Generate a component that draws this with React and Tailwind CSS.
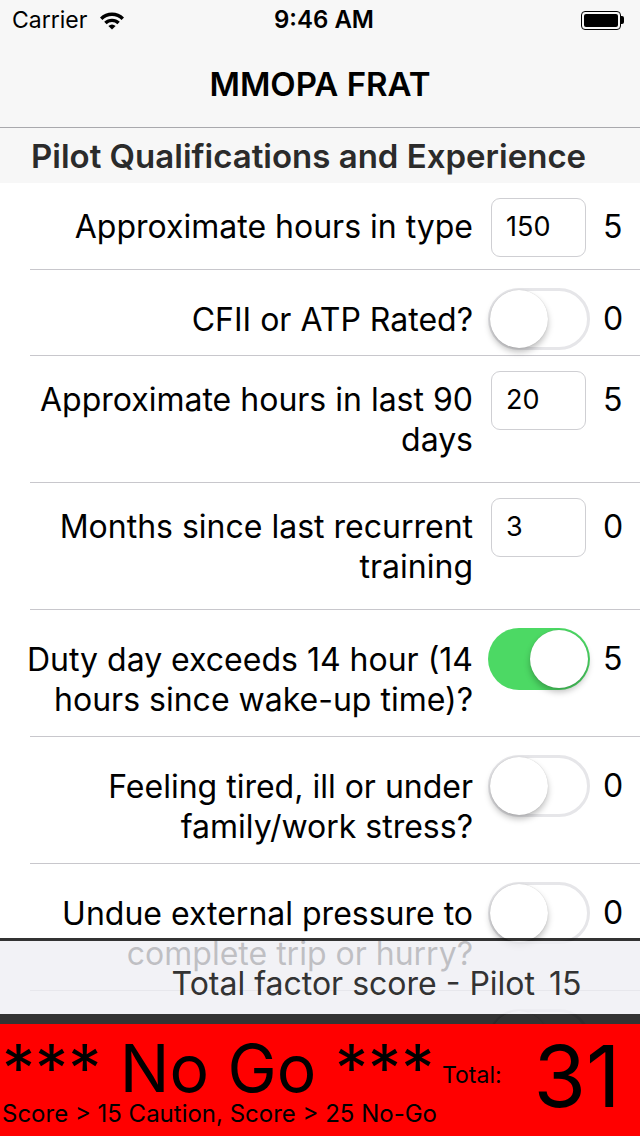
import React from "react";

const FONT = { fontFamily: "Inter, 'Liberation Sans', sans-serif" };

function Toggle({ on }) {
  return (
    <div
      className={
        "relative w-[102px] h-[62px] rounded-full " +
        (on ? "bg-[#4cd964]" : "bg-white border-[3px] border-[#e6e6e9]")
      }
    >
      <div
        className={
          "absolute w-[58px] h-[58px] rounded-full bg-white shadow-[0_4px_6px_rgba(0,0,0,0.25),0_0_1px_rgba(0,0,0,0.2)] " +
          (on ? "top-[2px] right-[2px]" : "top-[-1px] left-[-1px]")
        }
      />
    </div>
  );
}

function InputBox({ value }) {
  return (
    <div className="ml-[3px] w-[95px] h-[59px] rounded-[9px] border border-[#cfcfd3] flex items-center pl-[14px] text-[27px] text-black">
      {value}
    </div>
  );
}

function Row({ lines, control, score, h, toggle }) {
  return (
    <div>
      <div className={"flex items-start " + h}>
        <div
          className={
            "flex-1 text-right pr-[15px] text-[32px] leading-[40px] text-black " +
            (toggle ? "pt-[30px]" : "pt-[24px]")
          }
        >
          {lines.map((l, i) => (
            <div key={i} className="whitespace-nowrap">{l}</div>
          ))}
        </div>
        <div className={"w-[102px] " + (toggle ? "pt-[18px]" : "pt-[15px]")}>{control}</div>
        <div
          className={
            "w-[50px] pl-[13px] text-[32px] leading-[40px] text-black " +
            (toggle ? "pt-[29px]" : "pt-[24px]")
          }
        >
          {score}
        </div>
      </div>
      <div className="ml-[30px] h-px bg-[#c8c7cc]" />
    </div>
  );
}

export default function App() {
  return (
    <div className="relative w-[640px] h-[1136px] overflow-hidden bg-white" style={FONT}>
      {/* Status + nav bar */}
      <div className="bg-[#f7f7f7] border-b border-[#a9a9ad]">
        <div className="h-[40px] flex items-center px-[12px] relative">
          <div className="flex items-center gap-[12px]">
            <span className="text-[23px] text-black">Carrier</span>
            <svg width="26" height="20" viewBox="0 0 26 20">
              <path d="M1 7.5 A17 17 0 0 1 25 7.5 L22.6 10 A13.6 13.6 0 0 0 3.4 10 Z" fill="#000" />
              <path d="M5.2 11.8 A11.2 11.2 0 0 1 20.8 11.8 L18.4 14.2 A7.8 7.8 0 0 0 7.6 14.2 Z" fill="#000" />
              <path d="M9.4 16 A5.6 5.6 0 0 1 16.6 16 L13 19.6 Z" fill="#000" />
            </svg>
          </div>
          <div className="absolute left-0 right-0 top-0 h-[40px] flex items-center justify-center">
            <span className="text-[24px] font-semibold text-black ml-[8px]">9:46 AM</span>
          </div>
          <div className="ml-auto flex items-center mr-[4px]">
            <div className="w-[40px] h-[19px] rounded-[4px] border border-black p-[2px]">
              <div className="w-full h-full bg-black rounded-[2px]" />
            </div>
            <div className="w-[3px] h-[8px] bg-black rounded-r-[2px]" />
          </div>
        </div>
        <div className="h-[87px] flex items-center justify-center pt-[2px]">
          <span className="text-[33px] font-semibold text-black">MMOPA FRAT</span>
        </div>
      </div>

      {/* Section header */}
      <div className="h-[55px] bg-[#f7f7f7] flex items-center pl-[31px] pt-[3px]">
        <span className="text-[33px] font-semibold text-[#2b2b2b]">
          Pilot Qualifications and Experience
        </span>
      </div>

      {/* Rows */}
      <Row lines={["Approximate hours in type"]} control={<InputBox value="150" />} score="5" h="h-[86px]" />
      <Row lines={["CFII or ATP Rated?"]} control={<Toggle on={false} />} score="0" toggle h="h-[85px]" />
      <Row
        lines={["Approximate hours in last 90", "days"]}
        control={<InputBox value="20" />}
        score="5"
        h="h-[126px]"
      />
      <Row
        lines={["Months since last recurrent", "training"]}
        control={<InputBox value="3" />}
        score="0"
        h="h-[126px]"
      />
      <Row
        lines={["Duty day exceeds 14 hour (14", "hours since wake-up time)?"]}
        control={<Toggle on />}
        score="5"
        h="h-[126px]"
        toggle
      />
      <Row
        lines={["Feeling tired, ill or under", "family/work stress?"]}
        control={<Toggle on={false} />}
        score="0"
        h="h-[126px]"
        toggle
      />
      <Row
        lines={["Undue external pressure to", "complete trip or hurry?"]}
        control={<Toggle on={false} />}
        score="0"
        h="h-[126px]"
        toggle
      />
      <Row lines={[]} control={<Toggle on={false} />} score="" h="h-[85px]" toggle />

      {/* Footer overlay */}
      <div className="absolute left-0 right-0 top-[938px] bottom-0 flex flex-col">
        <div className="h-[3px] bg-black/80" />
        <div className="h-[73px] bg-[#efeff4]/80 flex items-center">
          <div className="w-[535px] text-right text-[32px] text-[#333] pt-[12px]">
            Total factor score - Pilot
          </div>
          <div className="pl-[14px] text-[32px] text-[#333] pt-[12px]">15</div>
        </div>
        <div className="h-[10px] bg-black/80" />
        <div className="flex-1 bg-[#ff0000] flex items-start text-black">
          <div className="w-[442px] pl-[2px] pt-[12px]">
            <div className="text-[66px] leading-[64px] whitespace-nowrap">*** No Go ***</div>
            <div className="text-[24px] leading-[28px] whitespace-nowrap">
              Score &gt; 15 Caution, Score &gt; 25 No-Go
            </div>
          </div>
          <div className="pt-[37px] text-[23px] leading-[28px]">Total:</div>
          <div className="pl-[32px] pt-[3px] text-[85px] leading-[100px]">31</div>
        </div>
      </div>
    </div>
  );
}
